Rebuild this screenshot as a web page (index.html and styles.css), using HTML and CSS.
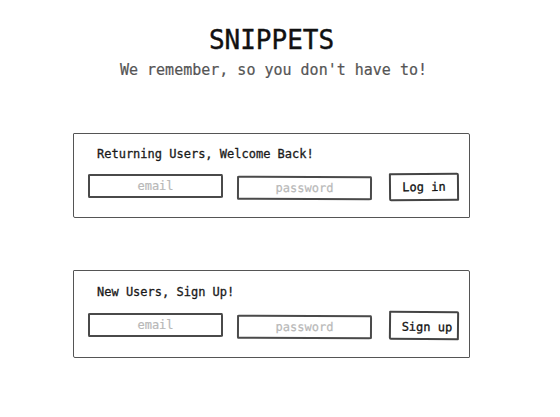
FILE: index.html
```html
<!DOCTYPE html>
<html>
<head>
<meta charset="utf-8">
<link rel="stylesheet" href="styles.css">
</head>
<body>
<main class="page">
  <header class="header">
    <h1 class="title">SNIPPETS</h1>
    <p class="subtitle">We remember, so you don't have to!</p>
  </header>
  <section class="panel panel-login">
    <p class="panel-label">Returning Users, Welcome Back!</p>
    <div class="row">
      <div class="field field-email">email</div>
      <div class="field field-password">password</div>
      <div class="btn btn-login">Log in</div>
    </div>
  </section>
  <section class="panel panel-signup">
    <p class="panel-label">New Users, Sign Up!</p>
    <div class="row">
      <div class="field field-email">email</div>
      <div class="field field-password">password</div>
      <div class="btn btn-signup">Sign up</div>
    </div>
  </section>
</main>
</body>
</html>
```
FILE: styles.css
```css
html, body {
  margin: 0;
  padding: 0;
  background: #fff;
}
body {
  font-family: "DejaVu Sans Mono", "Liberation Mono", monospace;
  color: #1a1a1a;
}
.page {
  width: 397px;
  margin-left: 73px;
  display: flex;
  flex-direction: column;
}
.header {
  display: flex;
  flex-direction: column;
  align-items: center;
  margin-top: 25px;
}
.title {
  margin: 0;
  font-size: 26px;
  line-height: 30px;
  font-weight: normal;
  color: #111;
  -webkit-text-stroke: 0.4px #111;
}
.subtitle {
  margin: 6px 0 0 0;
  font-size: 15px;
  line-height: 18px;
  color: #555;
  padding-left: 4px;
  -webkit-text-stroke: 0.2px #555;
}
.panel {
  border: 1.5px solid #555;
  border-radius: 1px 2px 1px 2px;
  padding: 13px 10px 16px 14px;
  display: flex;
  flex-direction: column;
}
.panel-login {
  margin-top: 54px;
}
.panel-signup {
  margin-top: 52px;
  padding-top: 14px;
  padding-bottom: 17px;
}
.panel-label {
  margin: 0 0 0 9px;
  font-size: 12px;
  line-height: 14px;
  color: #1a1a1a;
  -webkit-text-stroke: 0.3px #1a1a1a;
}
.row {
  display: flex;
  align-items: center;
  margin-top: 12px;
}
.field {
  box-sizing: border-box;
  width: 135px;
  height: 24px;
  border: 2px solid #4a4a4a;
  border-radius: 2px 1px 3px 1px / 1px 3px 1px 2px;
  display: flex;
  align-items: center;
  justify-content: center;
  font-size: 12px;
  color: #b8b8b8;
  -webkit-text-stroke: 0.2px #b8b8b8;
}
.field-email {
  margin-top: -2px;
}
.field-password {
  margin-left: 14px;
  margin-top: 2px;
  transform: rotate(0.3deg);
}
.btn {
  box-sizing: border-box;
  width: 70px;
  height: 28px;
  margin-left: 17px;
  border: 2px solid #444;
  border-radius: 1px 2px 1px 2px;
  display: flex;
  align-items: center;
  justify-content: center;
  font-size: 12px;
  color: #111;
  -webkit-text-stroke: 0.3px #111;
  transform: rotate(-0.5deg);
}
.btn-signup {
  height: 29px;
  padding-left: 6px;
  padding-top: 3px;
  transform: rotate(0.6deg);
}
```
